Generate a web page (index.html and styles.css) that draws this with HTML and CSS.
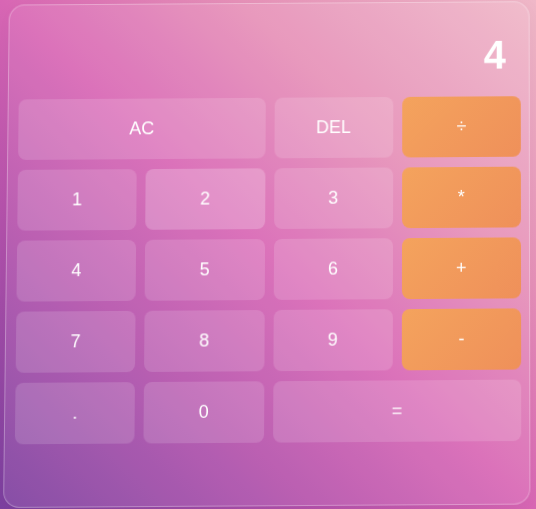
FILE: index.html
```html
<!DOCTYPE html>
<html>
<head>
<meta charset="utf-8">
<link rel="stylesheet" href="styles.css">
</head>
<body>
<div class="calc">
  <div class="display">4</div>
  <div class="keys">
    <button class="key span2">AC</button>
    <button class="key">DEL</button>
    <button class="key op">÷</button>
    <button class="key">1</button>
    <button class="key hover">2</button>
    <button class="key">3</button>
    <button class="key op">*</button>
    <button class="key">4</button>
    <button class="key">5</button>
    <button class="key">6</button>
    <button class="key op">+</button>
    <button class="key">7</button>
    <button class="key">8</button>
    <button class="key">9</button>
    <button class="key op">-</button>
    <button class="key">.</button>
    <button class="key">0</button>
    <button class="key span2">=</button>
  </div>
</div>
</body>
</html>
```

FILE: styles.css
```css
html, body {
  margin: 0;
  padding: 0;
  width: 536px;
  height: 509px;
  overflow: hidden;
}
body {
  background: linear-gradient(to top right, #7b3f9f 0%, #b652ac 30%, #d866b4 50%, #e690b8 72%, #f0b8c8 100%);
  font-family: "Liberation Sans", Arial, sans-serif;
}
.calc {
  box-sizing: border-box;
  margin: 1px 0 0 6px;
  width: 524px;
  height: 504px;
  padding: 0 8px 0 10px;
  border: 1px solid rgba(255, 255, 255, 0.3);
  border-radius: 16px;
  background: rgba(255, 255, 255, 0.08);
  box-shadow: 0 4px 20px rgba(0, 0, 0, 0.04);
  transform: perspective(2000px) rotateX(2.86deg) matrix(1, -0.0065, -0.005, 1, 0, 0);
}
.display {
  height: 95px;
  box-sizing: border-box;
  padding: 33px 15px 0 0;
  text-align: right;
  color: #fff;
  font-size: 40px;
  line-height: 40px;
  font-weight: bold;
}
.keys {
  display: grid;
  grid-template-columns: repeat(4, 1fr);
  grid-auto-rows: 61px;
  column-gap: 9px;
  row-gap: 10px;
}
.key {
  border: none;
  border-radius: 8px;
  background: rgba(255, 255, 255, 0.14);
  color: #fff;
  font-family: "Liberation Sans", Arial, sans-serif;
  font-size: 18px;
  padding: 0;
}
.key.span2 {
  grid-column: span 2;
}
.key.hover {
  background: rgba(255, 255, 255, 0.22);
}
.key.op {
  background: linear-gradient(135deg, #f4a35d, #ef905a);
}
```
